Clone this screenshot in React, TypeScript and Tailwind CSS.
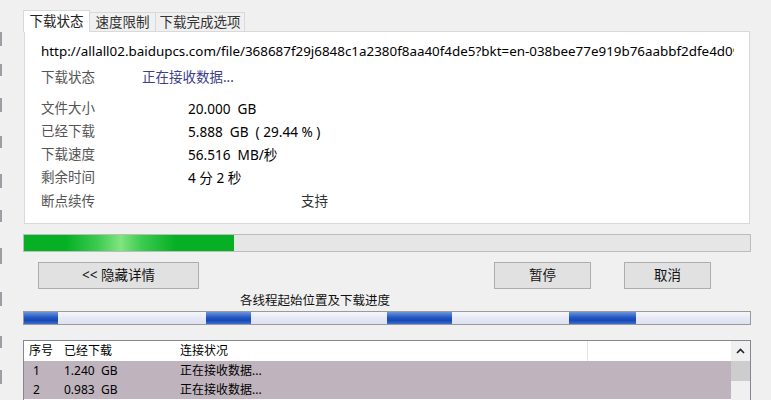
import React from 'react'

const rows = [
  { label: '文件大小', value: '20.000  GB' },
  { label: '已经下载', value: '5.888  GB  ( 29.44 % )' },
  { label: '下载速度', value: '56.516  MB/秒' },
  { label: '剩余时间', value: '4 分 2 秒' },
]

const threads = [
  { id: 1, done: '1.240  GB', state: '正在接收数据...' },
  { id: 2, done: '0.983  GB', state: '正在接收数据...' },
]

const marks = ['h-[14px] mt-[32px]', 'h-[12px] mt-[18px]', 'h-[14px] mt-[22px]', 'h-[12px] mt-[24px]', 'h-[14px] mt-[26px]', 'h-[12px] mt-[22px]', 'h-[16px] mt-[26px]', 'h-[14px] mt-[28px]', 'h-[12px] mt-[30px]', 'h-[14px] mt-[22px]']

const seg = 'h-full bg-[linear-gradient(180deg,#6d95dc_0%,#2358c4_45%,#1848b4_70%,#3b6fd0_100%)]'

export default function App() {
  return (
    <div className="w-[771px] h-[400px] overflow-hidden bg-[#f0f0f0] flex text-[#000] font-['Noto_Sans','Noto_Sans_CJK_SC',sans-serif]">
      {/* window behind, peeking in */}
      <div className="w-[4px] flex flex-col">
        {marks.map((m, i) => (
          <div key={i} className={`w-[2px] bg-[#4a4a55] opacity-50 ${m}`} />
        ))}
      </div>

      <div className="flex-1 pl-[19px] pr-[20px] flex flex-col">
        {/* Tabs */}
        <div className="mt-[10px] flex items-end h-[22px] relative z-10">
          <div className="h-[22px] w-[67px] bg-white border border-[#d9d9d9] border-b-0 text-[13.5px] leading-[20px] text-center text-[#222]">下载状态</div>
          <div className="h-[20px] w-[66px] border border-[#d9d9d9] border-l-0 border-b-0 text-[13.5px] leading-[19px] text-center text-[#333]">速度限制</div>
          <div className="h-[20px] w-[89px] border border-[#d9d9d9] border-l-0 border-b-0 text-[13.5px] leading-[19px] text-center text-[#333]">下载完成选项</div>
        </div>

        {/* Status panel */}
        <div className="ml-[1px] w-[726px] h-[193px] -mt-[1px] bg-white border border-[#d9d9d9] pl-[16px] pr-[15px] flex flex-col">
          <div className="mt-[9px] h-[20px] leading-[20px] text-[13.4px] whitespace-nowrap overflow-hidden">
            http://allall02.baidupcs.com/file/368687f29j6848c1a2380f8aa40f4de5?bkt=en-038bee77e919b76aabbf2dfe4d09
          </div>
          <div className="mt-[6px] h-[20px] leading-[20px] flex text-[13.5px]">
            <span className="w-[101px] text-[#555]">下载状态</span>
            <span className="text-[#3d3d8c]">正在接收数据...</span>
          </div>
          <div className="mt-[10px] flex flex-col">
            {rows.map((r) => (
              <div key={r.label} className="h-[23px] leading-[23px] flex text-[13.5px]">
                <span className="w-[147px] text-[#555]">{r.label}</span>
                <span className="whitespace-pre text-[13.6px]">{r.value}</span>
              </div>
            ))}
            <div className="h-[23px] leading-[24px] flex text-[13.5px]">
              <span className="w-[260px] text-[#555]">断点续传</span>
              <span className="text-[#333]">支持</span>
            </div>
          </div>
        </div>

        {/* Overall progress */}
        <div className="mt-[10px] h-[18px] w-[728px] bg-[#e6e6e6] border border-[#bcbcbc] flex">
          <div className="w-[210px] h-full bg-[linear-gradient(90deg,#06b025_0%,#06b025_20%,#3ccb50_35%,#80e580_46%,#3ccb50_56%,#06b025_72%,#06b025_100%)]" />
        </div>

        {/* Buttons */}
        <div className="mt-[10px] h-[27px] flex">
          <button className="ml-[15px] w-[161px] h-[27px] bg-[#e1e1e1] border border-[#adadad] text-[13.5px] text-[#111]">&lt;&lt; 隐藏详情</button>
          <button className="ml-[295px] w-[97px] h-[27px] bg-[#e1e1e1] border border-[#adadad] text-[13.5px] text-[#111]">暂停</button>
          <button className="ml-[33px] w-[87px] h-[27px] bg-[#e1e1e1] border border-[#adadad] text-[13.5px] text-[#111]">取消</button>
        </div>

        <div className="h-[22px] w-[728px] flex items-center pt-[2px] pl-[217px] text-[12.5px] text-[#111]">各线程起始位置及下载进度</div>

        {/* Thread progress */}
        <div className="h-[14px] w-[728px] border border-[#9a9a9a] grid grid-cols-4 bg-[linear-gradient(180deg,#f6f7fc_0%,#e6e9f5_50%,#dde1f0_100%)]">
          <div className="flex"><div className={`w-[34px] ${seg}`} /></div>
          <div className="flex"><div className={`w-[45px] ${seg}`} /></div>
          <div className="flex"><div className={`w-[65px] ${seg}`} /></div>
          <div className="flex"><div className={`w-[67px] ${seg}`} /></div>
        </div>

        {/* Thread list */}
        <div className="mt-[15px] w-[728px] flex-1 border border-[#828790] border-b-0 bg-white flex">
          <div className="flex-1 flex flex-col text-[12px]">
            <div className="h-[20px] flex items-center bg-white">
              <span className="w-[40px] pl-[5px]">序号</span>
              <span className="w-[116px]">已经下载</span>
              <span className="w-[407px]">连接状况</span>
              <span className="h-full border-l border-[#e5e5e5]" />
            </div>
            {threads.map((t) => (
              <div key={t.id} className="h-[19px] flex items-center bg-[#bfb4bd]">
                <span className="w-[40px] pl-[9px]">{t.id}</span>
                <span className="w-[116px] whitespace-pre">{t.done}</span>
                <span>{t.state}</span>
              </div>
            ))}
          </div>
          <div className="w-[19px] bg-[#f0f0f0] flex flex-col">
            <div className="h-[20px] flex items-center justify-center">
              <svg width="9" height="6" viewBox="0 0 9 6" fill="none">
                <path d="M1 5L4.5 1.5L8 5" stroke="#222" strokeWidth="1.6" />
              </svg>
            </div>
            <div className="h-[20px] bg-[#cdcdcd]" />
          </div>
        </div>
      </div>
    </div>
  )
}
